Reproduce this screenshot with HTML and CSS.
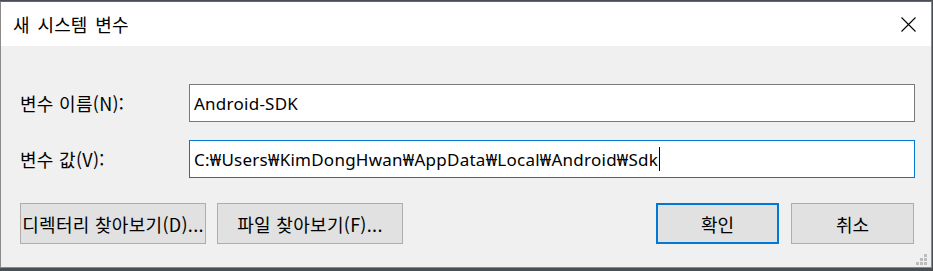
FILE: index.html
```html
<!DOCTYPE html>
<html lang="ko">
<head>
    <meta charset="UTF-8">
    <meta name="viewport" content="width=device-width, initial-scale=1.0">
    <title>새 시스템 변수</title>
    <link rel="stylesheet" href="styles.css">
</head>
<body>
    <div class="dialog">
        <div class="titlebar">
            <span class="title">새 시스템 변수</span>
            <button class="close" title="닫기">
                <svg width="15" height="15" viewBox="0 0 15 15">
                    <path d="M0.5 0.5 L14.5 14.5 M14.5 0.5 L0.5 14.5" stroke="#000" stroke-width="1.1" fill="none"/>
                </svg>
            </button>
        </div>
        <div class="content">
            <div class="form">
                <label class="label" for="varName">변수 이름(N):</label>
                <div class="field" id="varName">Android-SDK</div>
                <label class="label" for="varValue">변수 값(V):</label>
                <div class="field focused" id="varValue">C:₩Users₩KimDongHwan₩AppData₩Local₩Android₩Sdk<span class="caret"></span></div>
            </div>
            <div class="buttons">
                <div class="group">
                    <button class="btn wide">디렉터리 찾아보기(D)...</button>
                    <button class="btn wide">파일 찾아보기(F)...</button>
                </div>
                <div class="group">
                    <button class="btn default">확인</button>
                    <button class="btn">취소</button>
                </div>
            </div>
            <div class="grip">
                <i style="grid-area: 1 / 3"></i>
                <i style="grid-area: 2 / 2"></i><i style="grid-area: 2 / 3"></i>
                <i style="grid-area: 3 / 1"></i><i style="grid-area: 3 / 2"></i><i style="grid-area: 3 / 3"></i>
            </div>
        </div>
    </div>
</body>
</html>
```

FILE: styles.css
```css
html, body {
    margin: 0;
    height: 271px;
    overflow: hidden;
}
body {
    background: #4a4f55;
    font-family: "Noto Sans", "Noto Sans CJK KR", sans-serif;
    color: #000;
    padding-top: 1px;
    box-sizing: border-box;
}
.dialog {
    width: 932px;
    height: 267px;
    box-sizing: border-box;
    border: 1px solid #8a8a8a;
    border-top-color: #5c6a70;
    background: #f0f0f0;
    display: flex;
    flex-direction: column;
}
.titlebar {
    height: 44px;
    background: #fff;
    display: flex;
    align-items: center;
    justify-content: space-between;
    padding-left: 12px;
}
.title {
    font-size: 18px;
    font-family: "Noto Sans CJK KR", sans-serif;
    word-spacing: 3px;
}
.close {
    width: 46px;
    height: 44px;
    border: none;
    background: transparent;
    margin-right: 0;
    padding: 0 0 0 0;
    display: flex;
    align-items: center;
    justify-content: center;
}
.content {
    flex: 1;
    position: relative;
    padding: 38px 16px 0 19px;
}
.form {
    display: grid;
    grid-template-columns: 169px 1fr;
    row-gap: 18px;
    align-items: center;
}
.label {
    font-size: 18px;
    font-family: "Noto Sans CJK KR", sans-serif;
    letter-spacing: 0.3px;
}
.field {
    height: 38px;
    box-sizing: border-box;
    border: 1px solid #7a7a7a;
    background: #fff;
    padding: 0 4px;
    font-size: 17px;
    letter-spacing: 0.25px;
    display: flex;
    align-items: center;
}
.field.focused {
    border-color: #0078d7;
}
.caret {
    display: inline-block;
    width: 1px;
    height: 24px;
    background: #000;
    margin-left: 1px;
}
.buttons {
    display: flex;
    justify-content: space-between;
    margin-top: 25px;
    padding-right: 1px;
}
.group {
    display: flex;
    gap: 11px;
}
.group + .group {
    gap: 12px;
}
.btn {
    width: 123px;
    height: 41px;
    box-sizing: border-box;
    background: #e1e1e1;
    border: 1px solid #adadad;
    font-family: "Noto Sans CJK KR", sans-serif;
    font-size: 18px;
    color: #000;
    padding: 0;
    white-space: nowrap;
}
.btn.wide {
    width: 186px;
    letter-spacing: 0.3px;
}
.btn.default {
    border: 2px solid #0078d7;
}
.grip {
    position: absolute;
    right: 4px;
    bottom: 2px;
    display: grid;
    grid-template-columns: repeat(3, 3px);
    grid-template-rows: repeat(3, 3px);
    gap: 1px;
}
.grip i {
    background: #bcbcbc;
}
```
